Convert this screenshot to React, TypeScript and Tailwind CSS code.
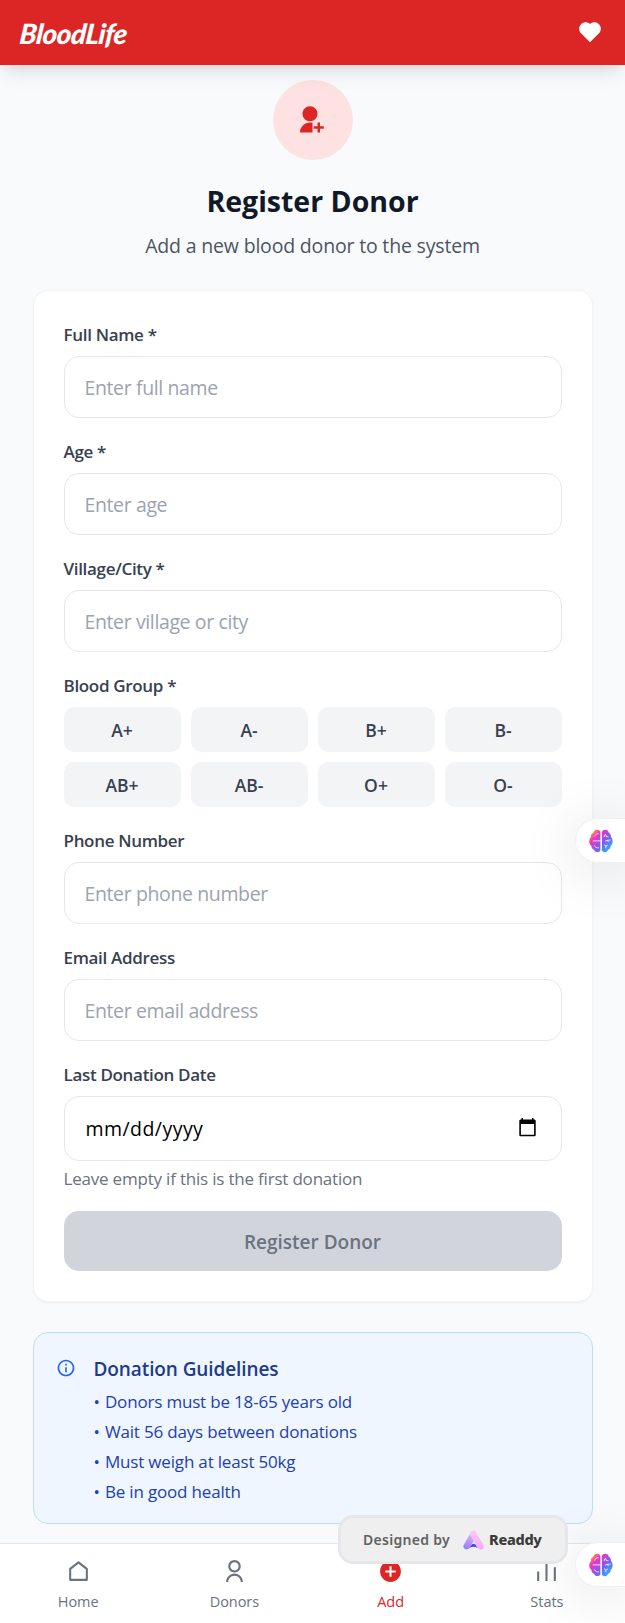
import React from "react";
import { RiAddCircleFill, RiHeartFill, RiHomeLine, RiInformationLine, RiUserAddFill, RiUserLine } from "react-icons/ri";

const bloodGroups = ["A+", "A-", "B+", "B-", "AB+", "AB-", "O+", "O-"];
const guidelines = [
  "Donors must be 18-65 years old",
  "Wait 56 days between donations",
  "Must weigh at least 50kg",
  "Be in good health",
];

function Label({ children }: { children: React.ReactNode }) {
  return (
    <label className="mb-[9px] block pt-px text-[17px] font-semibold leading-[25px] tracking-[-0.32px] text-[#374151]">
      {children}
    </label>
  );
}

function Field({ label, placeholder }: { label: string; placeholder: string }) {
  return (
    <div>
      <Label>{label}</Label>
      <input
        type="text"
        placeholder={placeholder}
        className="block h-[62px] w-full rounded-[15px] border border-[#e5e7eb] bg-white px-5 text-[19.5px] tracking-[-0.38px] outline-none placeholder:text-[#9ca3af]"
      />
    </div>
  );
}

function BrainTab({ id, className }: { id: string; className: string }) {
  return (
    <div
      className={`absolute right-0 flex h-[45px] w-[50px] items-center rounded-l-full border border-r-0 border-[#f0f0f2] bg-white pl-[12.5px] shadow-[0_8px_60px_rgba(0,0,0,0.14)] ${className}`}
    >
      <svg width="24" height="24" viewBox="0 0 24 24" fill="none">
        <defs>
          <linearGradient id={id} x1="3" y1="2" x2="22" y2="21" gradientUnits="userSpaceOnUse">
            <stop stopColor="#ff9f2e" />
            <stop offset="0.25" stopColor="#ee35c0" />
            <stop offset="0.6" stopColor="#7b5cf0" />
            <stop offset="1" stopColor="#22b8ff" />
          </linearGradient>
        </defs>
        <path
          fill={`url(#${id})`}
          d="M11.4 2.8v18.4c-.6 1.6-2.2 2.1-3.6 1.9-1.5-.2-2.3-1.1-2.6-2.4C3.3 20.3 2.3 18.8 2.5 17 .9 15.9 0 14 .3 12 .3 10.2 1 8.9 2 8 1.7 6 2.7 4.4 4.3 3.8 4.7 1.8 6.2.7 8 .7c1.6 0 2.9.8 3.4 2.1ZM12.9 2.8c.6-1.4 2-2.1 3.6-2 1.7.1 3 1.1 3.3 2.9 1.7.7 2.4 2.4 2.1 4.2 1.1 1.1 1.8 2.4 1.7 4.1.1 2-.6 3.8-1.9 4.9 0 1.9-1 3.4-2.7 3.9-.5 1.4-1.5 2.3-3 2.4-1.3.1-2.5-.6-3.1-1.8Z"
        />
        <path
          stroke="#fff"
          strokeOpacity="0.8"
          strokeWidth="1"
          strokeLinecap="round"
          d="M4.2 11.9h7M5.8 7.2c.3-1.6 1.7-2.6 3.4-2.5M5.4 16.8c1 1.7 2.5 2.4 4.2 2M15 7.8l1.4-2.6 1 2.5h1.7M16.5 12l1.7-.6 1.2 1.4M18.2 11.4l3-.4M15.3 15.8l1.5 1.3 1.7-.9M16.8 17.1v1.9"
        />
      </svg>
    </div>
  );
}

function StatsIcon() {
  return (
    <svg width="25" height="25" viewBox="0 0 24 24" fill="currentColor">
      <path d="M3 12h2v9H3zM19 8h2v13h-2zM11 2h2v19h-2z" />
    </svg>
  );
}

function NavItem({ icon, label, active }: { icon: React.ReactNode; label: string; active?: boolean }) {
  return (
    <a className={`flex flex-col items-center pt-[15px] ${active ? "text-[#dc2626]" : "text-[#6b7280]"}`}>
      <span className="flex size-[25px] items-center justify-center">{icon}</span>
      <span className="mt-[8px] text-[14.5px] font-medium leading-5 tracking-[-0.05px]">{label}</span>
    </a>
  );
}

export default function App() {
  return (
    <div className="relative flex h-[1623px] w-full flex-col overflow-hidden bg-[#f9fafb] font-['Open_Sans','Noto_Sans',sans-serif]">
      <header className="z-10 flex h-[65px] shrink-0 items-center justify-between bg-[#dc2626] px-5 text-white shadow-[0_12px_19px_-4px_rgba(0,0,0,0.1),0_5px_8px_-5px_rgba(0,0,0,0.1)]">
        <span className="origin-left -skew-x-6 font-['Lato',cursive] text-[28px] font-black italic leading-none tracking-[-0.5px]">
          BloodLife
        </span>
        <RiHeartFill size={26} className="mb-px mr-[2px]" />
      </header>

      <main className="mx-auto w-[560px] pt-[15px]">
        <div className="text-center">
          <div className="mx-auto mb-5 flex size-20 items-center justify-center rounded-full bg-[#fee2e2] text-[#dc2626]">
            <RiUserAddFill size={30} className="mr-[5px]" />
          </div>
          <h1 className="pt-0.5 text-[28.5px] font-bold leading-[38px] text-[#111827]">Register Donor</h1>
          <p className="mt-2.5 pt-0.5 text-[19.5px] leading-[28px] tracking-[-0.18px] text-[#4b5563]">
            Add a new blood donor to the system
          </p>
        </div>

        <form className="mt-[30px] flex flex-col gap-5 rounded-[15px] border border-[#f3f4f6] bg-white p-[30px] shadow-[0_1px_3px_rgba(0,0,0,0.05)]">
          <Field label="Full Name *" placeholder="Enter full name" />
          <Field label="Age *" placeholder="Enter age" />
          <Field label="Village/City *" placeholder="Enter village or city" />
          <div>
            <Label>Blood Group *</Label>
            <div className="grid grid-cols-4 gap-2.5">
              {bloodGroups.map((group) => (
                <button
                  key={group}
                  type="button"
                  className="h-[45px] rounded-[10px] bg-[#f3f4f6] pt-px text-[17.5px] font-semibold text-[#374151]"
                >
                  {group}
                </button>
              ))}
            </div>
          </div>
          <Field label="Phone Number" placeholder="Enter phone number" />
          <Field label="Email Address" placeholder="Enter email address" />
          <div>
            <Label>Last Donation Date</Label>
            <div className="flex h-[65px] items-center justify-between rounded-[15px] border border-[#e5e7eb] pl-[21px] pr-[25px] text-[19.5px] tracking-[0.45px] text-black">
              <span>mm/dd/yyyy</span>
              <svg width="17" height="19" viewBox="0 0 17 19" className="mb-0.5" fill="currentColor">
                <path
                  fillRule="evenodd"
                  d="M2.5 0h1.5v1.5h9V0h1.5v1.5h.8c.8 0 1.4.6 1.4 1.4v14c0 .8-.6 1.4-1.4 1.4H1.7c-.8 0-1.4-.6-1.4-1.4v-14c0-.8.6-1.4 1.4-1.4h.8V0ZM1.9 6v10.7h13.2V6H1.9Z"
                />
              </svg>
            </div>
            <p className="mt-[5px] pt-px text-[17px] leading-6 tracking-[-0.2px] text-[#6b7280]">
              Leave empty if this is the first donation
            </p>
          </div>
          <button
            type="button"
            className="h-[60px] rounded-[15px] bg-[#d1d5db] pt-0.5 text-[19px] font-semibold text-[#6b7280]"
          >
            Register Donor
          </button>
        </form>

        <section className="mt-[30px] flex gap-[15px] rounded-[15px] border border-[#bfdbfe] bg-[#eff6ff] p-5">
          <span className="mt-[2.5px] flex size-[25px] items-center justify-center text-[#2563eb]">
            <RiInformationLine size={20} />
          </span>
          <div>
            <h3 className="pt-0.5 text-[19px] font-semibold leading-[28px] tracking-[-0.1px] text-[#1e3a8a]">
              Donation Guidelines
            </h3>
            <ul className="-mb-px mt-[6px] space-y-[5px] text-[17px] leading-[25px] tracking-[-0.18px] text-[#1e40af]">
              {guidelines.map((item) => (
                <li key={item}>
                  <span className="mr-px">•</span> {item}
                </li>
              ))}
            </ul>
          </div>
        </section>
      </main>

      <nav className="mt-auto grid h-20 shrink-0 grid-cols-4 border-t border-[#e5e7eb] bg-white">
        <NavItem icon={<RiHomeLine size={25} />} label="Home" />
        <NavItem icon={<RiUserLine size={25} />} label="Donors" />
        <NavItem icon={<RiAddCircleFill size={25} />} label="Add" active />
        <NavItem icon={<StatsIcon />} label="Stats" />
      </nav>

      <BrainTab id="brain-upper" className="top-[818px]" />
      <BrainTab id="brain-lower" className="top-[1542px]" />

      <div className="absolute left-[338px] top-[1515px] flex h-[49px] w-[230px] items-center rounded-[15px] border-3 border-[#e5e7eb] bg-[#efefef] pl-[22px] font-['Noto_Sans',sans-serif]">
        <span className="text-[14px] font-semibold tracking-[0.3px] text-[#626262]">Designed by</span>
        <svg width="21" height="20" viewBox="0 0 21 20" className="ml-[13px]">
          <defs>
            <linearGradient id="readdy-left" x1="10" y1="0" x2="3" y2="20" gradientUnits="userSpaceOnUse">
              <stop stopColor="#f5b8ff" />
              <stop offset="1" stopColor="#8f7bff" />
            </linearGradient>
            <linearGradient id="readdy-right" x1="9" y1="1" x2="18" y2="19" gradientUnits="userSpaceOnUse">
              <stop stopColor="#ffc9f3" />
              <stop offset="1" stopColor="#f9a8fb" />
            </linearGradient>
          </defs>
          <path fill="url(#readdy-left)" d="M8.2 2C9.2.2 11.6.2 12.7 2l1.5 3L6.8 17.5C5.2 20 2 20 .8 18c-.7-1.2-.5-2.3.2-3.4L8.2 2Z" />
          <path fill="url(#readdy-right)" d="M8.2 2C9.2.2 11.7.2 12.7 2l7.4 12.6c1.7 3-.5 5.6-3.4 4.6-1.1-.4-1.7-1-2.3-2L7.8 6C7 4.7 7.4 3.3 8.2 2Z" />
          <path fill="#4b3ff0" d="m6.3 18 2.5-3.5c1-1.2 2.7-1.1 3.6.1l2.2 3.4c-2.5-1.8-5.5-1.8-8.3 0Z" />
        </svg>
        <span className="ml-[5px] text-[14.5px] font-extrabold tracking-[-0.3px] text-[#3b3b3b]">Readdy</span>
      </div>
    </div>
  );
}
